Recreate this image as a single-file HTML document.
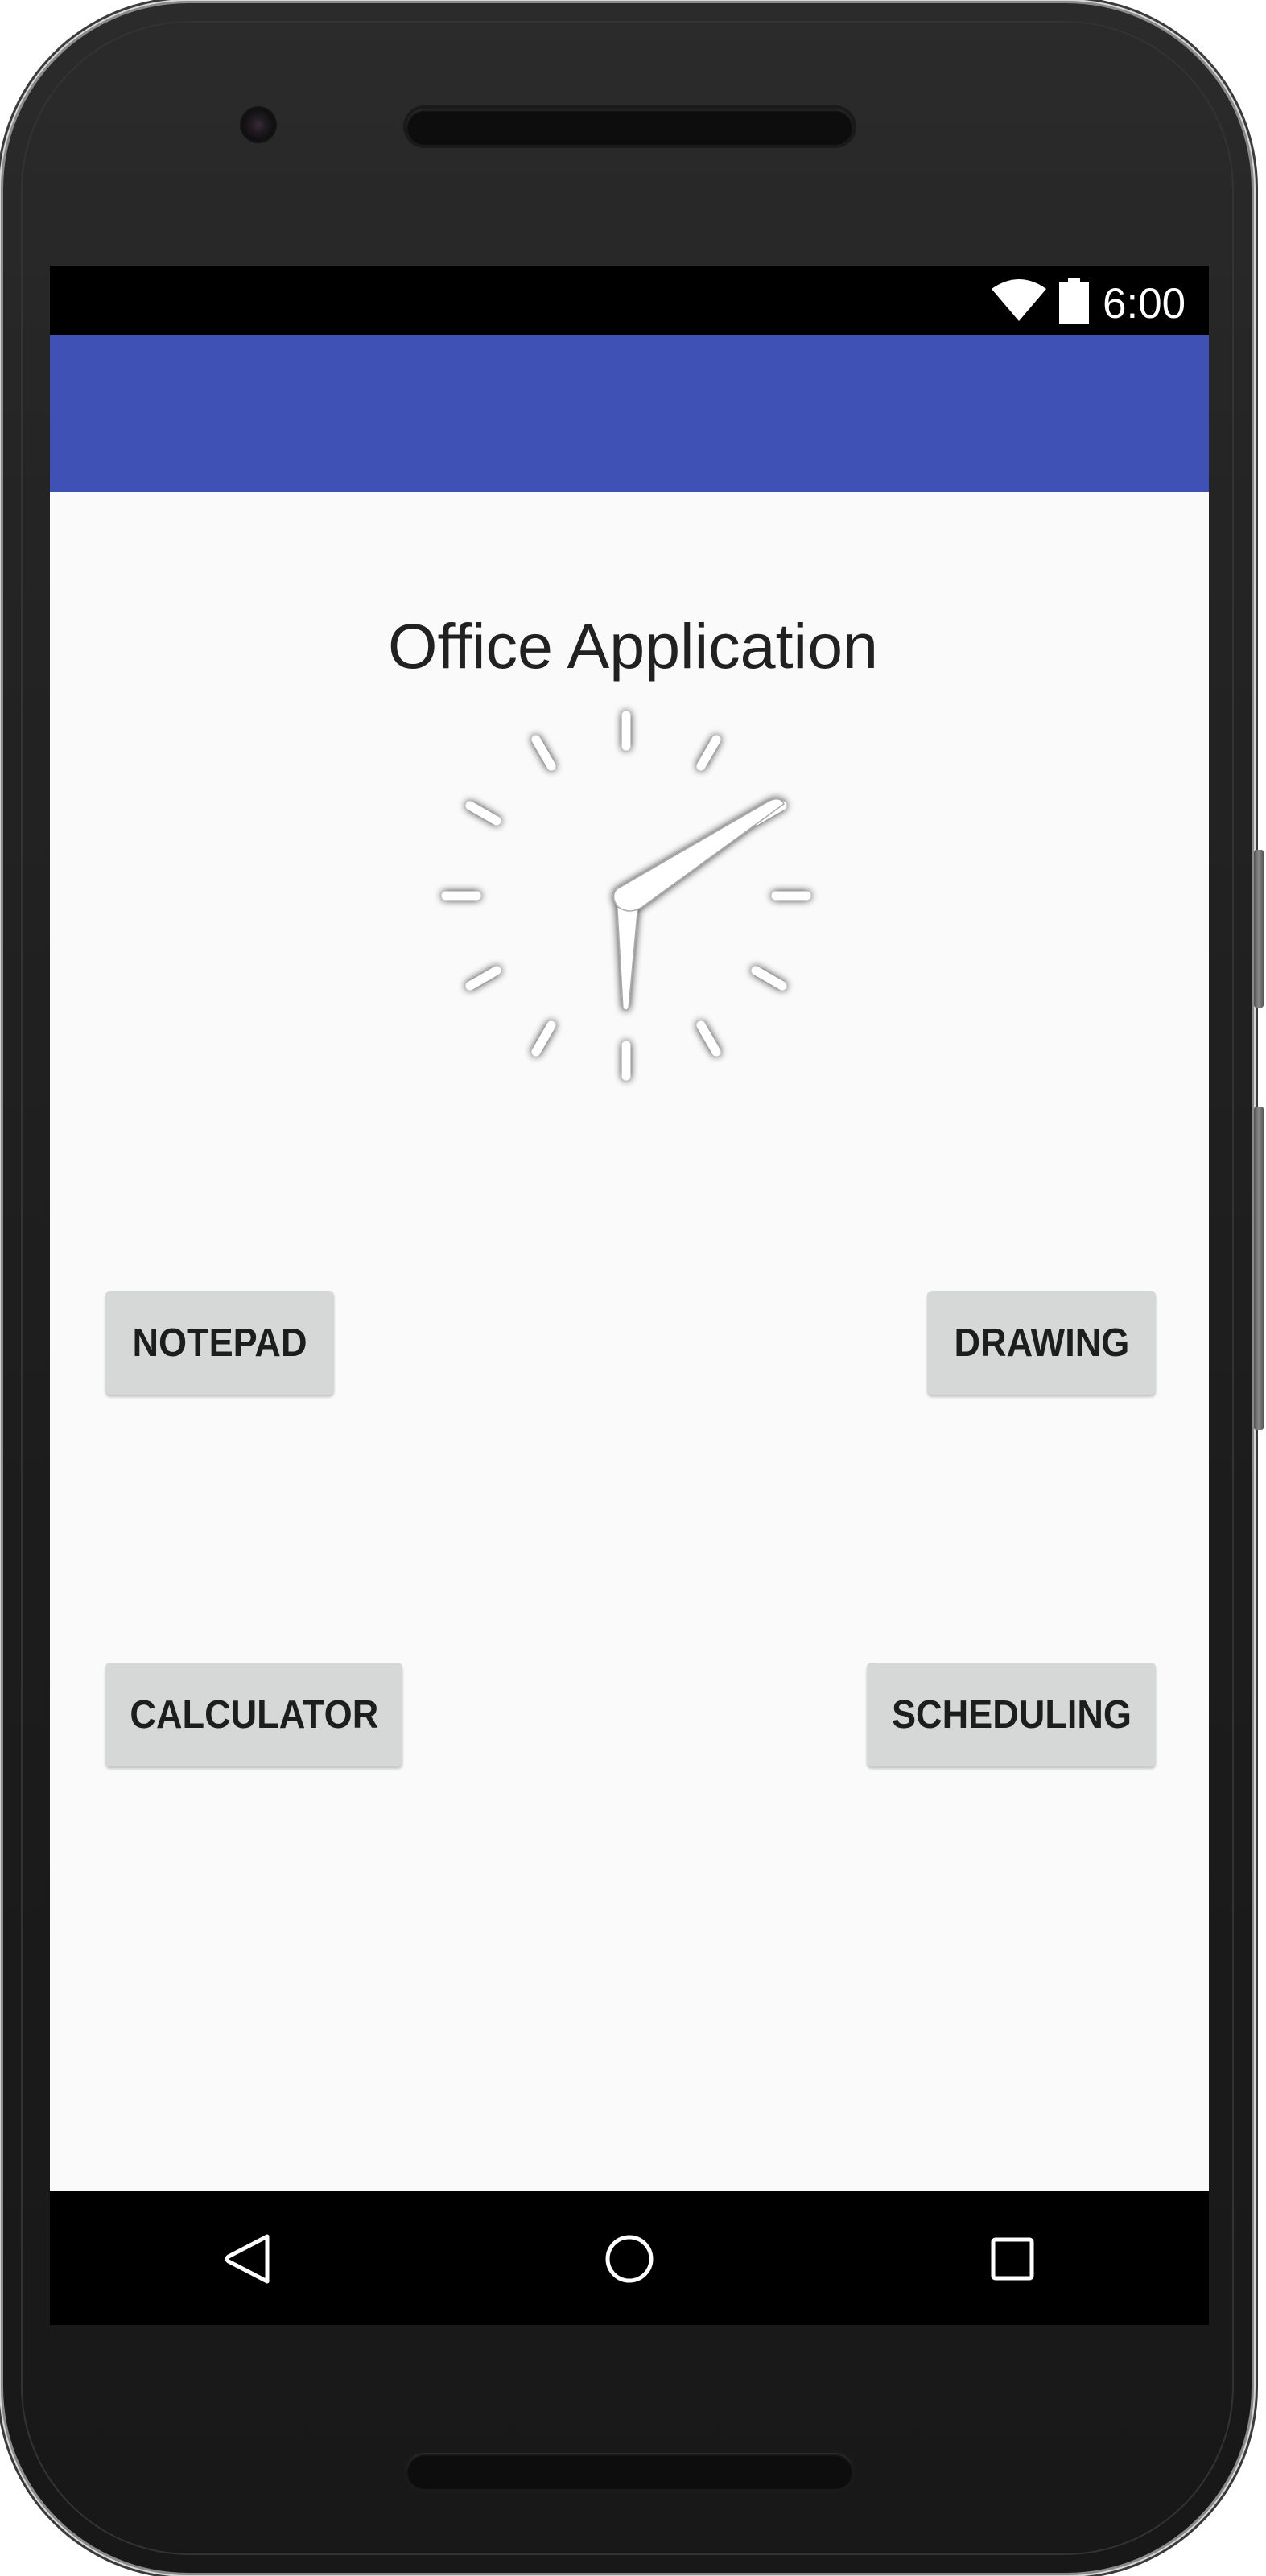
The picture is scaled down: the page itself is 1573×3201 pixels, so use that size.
<!DOCTYPE html>
<html><head><meta charset="utf-8"><style>
html,body{margin:0;padding:0;width:1573px;height:3201px;overflow:hidden;background:#fff;}
body{position:relative;font-family:"Liberation Sans",Arial,sans-serif;}
.phone{position:absolute;left:4px;top:4px;width:1551px;height:3193px;border-radius:230px;background:linear-gradient(#2b2b2b 0%,#242424 20%,#1c1c1c 60%,#181818 100%);box-shadow:0 0 0 3px #8a8a8a,0 0 0 5px #d8d8d8,0 0 0 8px #3a3a3a;}
.inner{position:absolute;left:22px;top:22px;right:22px;bottom:22px;border-radius:210px;border:2px solid #333;}
.sbtn{position:absolute;left:1558px;width:12px;background:linear-gradient(90deg,#555,#888,#555);border-radius:3px;}
.speaker{position:absolute;left:505px;width:555px;height:45px;border-radius:23px;background:#0d0d0d;box-shadow:0 0 0 4px #1a1a1a,inset 0 2px 3px #333;}
.cam{position:absolute;left:298px;top:132px;width:46px;height:46px;border-radius:50%;background:radial-gradient(circle at 50% 50%,#3a2a3a 0,#201a20 30%,#101010 60%,#262626 100%);}
.screen{position:absolute;left:62px;top:330px;width:1440px;height:2559px;background:#fafafa;overflow:hidden;}
.status{position:absolute;left:0;top:0;width:100%;height:86px;background:#000;}
.appbar{position:absolute;left:0;top:86px;width:100%;height:195px;background:#3f51b5;}
.title{position:absolute;left:0;width:100%;top:758px;text-align:center;font-size:79px;color:#212121;line-height:90px;}
.btn{position:absolute;height:129px;background:#d6d7d7;border-radius:6px;box-shadow:0 3px 3px rgba(0,0,0,.22);font-weight:bold;font-size:49px;color:#1d1d1d;display:flex;align-items:center;justify-content:center;}
.btn span{display:inline-block;transform:scaleX(.92);}
</style></head><body>
<div class="phone"><div class="inner"></div></div>
<div class="sbtn" style="top:1056px;height:196px"></div>
<div class="sbtn" style="top:1375px;height:402px"></div>
<div class="cam"></div>
<div class="speaker" style="top:135px"></div>
<div class="speaker" style="top:3048px"></div>

<div class="screen" style="top:330px">
  <div class="status">
    <svg style="position:absolute;left:1170px;top:15px" width="70" height="55" viewBox="0 0 70 55"><path d="M0 14 Q34 -10 68 14 L34 54 Z" fill="#fff"/></svg>
    <svg style="position:absolute;left:1254px;top:15px" width="38" height="58" viewBox="0 0 38 58"><rect x="11" y="0" width="15" height="6" fill="#fff"/><rect x="0" y="5" width="37" height="53" fill="#fff"/></svg>
    <div style="position:absolute;left:1308px;top:18px;font-size:53px;color:#fff;line-height:60px">6:00</div>
  </div>
  <div class="appbar"></div>
</div>

<div class="title">Office Application</div>

<svg style="position:absolute;left:528px;top:860px" width="500" height="500" viewBox="0 0 500 500">
  <defs><filter id="sh" x="-30%" y="-30%" width="160%" height="160%"><feGaussianBlur in="SourceAlpha" stdDeviation="5"/><feComponentTransfer><feFuncA type="linear" slope="0.85"/></feComponentTransfer><feMerge><feMergeNode/><feMergeNode in="SourceGraphic"/></feMerge></filter></defs>
  <g transform="translate(250,253)" filter="url(#sh)">
    <g stroke="#fff" stroke-width="11" stroke-linecap="round">
      <line x1="0" y1="-186" x2="0" y2="-224"/>
      <line x1="0" y1="-186" x2="0" y2="-224" transform="rotate(30)"/>
      <line x1="0" y1="-186" x2="0" y2="-224" transform="rotate(60)"/>
      <line x1="0" y1="-186" x2="0" y2="-224" transform="rotate(90)"/>
      <line x1="0" y1="-186" x2="0" y2="-224" transform="rotate(120)"/>
      <line x1="0" y1="-186" x2="0" y2="-224" transform="rotate(150)"/>
      <line x1="0" y1="-186" x2="0" y2="-224" transform="rotate(180)"/>
      <line x1="0" y1="-186" x2="0" y2="-224" transform="rotate(210)"/>
      <line x1="0" y1="-186" x2="0" y2="-224" transform="rotate(240)"/>
      <line x1="0" y1="-186" x2="0" y2="-224" transform="rotate(270)"/>
      <line x1="0" y1="-186" x2="0" y2="-224" transform="rotate(300)"/>
      <line x1="0" y1="-186" x2="0" y2="-224" transform="rotate(330)"/>
    </g>
    <path d="M-12 0 L16 0 L3 140 Q0 144 -4 140 Z" fill="#fff" stroke="#aaa" stroke-width="1.5"/>
    <path d="M-12 -8 L178 -118 Q192 -124 196 -114 L20 14 Q4 24 -10 14 Q-20 2 -12 -8 Z" fill="#fff" stroke="#aaa" stroke-width="1.5"/>
  </g>
</svg>

<div class="btn" style="left:131px;top:1604px;width:284px"><span>NOTEPAD</span></div>
<div class="btn" style="left:1152px;top:1604px;width:284px"><span>DRAWING</span></div>
<div class="btn" style="left:131px;top:2066px;width:369px"><span>CALCULATOR</span></div>
<div class="btn" style="left:1077px;top:2066px;width:359px"><span>SCHEDULING</span></div>

<div style="position:absolute;left:62px;top:2723px;width:1440px;height:166px;background:#000">
  <svg width="1440" height="166" viewBox="0 0 1440 166" style="position:absolute;left:0;top:0">
    <path d="M270 56 L270 112 L222 87 Q218 84 222 81 Z" fill="none" stroke="#fff" stroke-width="5" stroke-linejoin="round"/>
    <circle cx="720" cy="84" r="27" fill="none" stroke="#fff" stroke-width="5"/>
    <rect x="1172" y="60" width="48" height="48" rx="3" fill="none" stroke="#fff" stroke-width="5"/>
  </svg>
</div>
</body></html>
